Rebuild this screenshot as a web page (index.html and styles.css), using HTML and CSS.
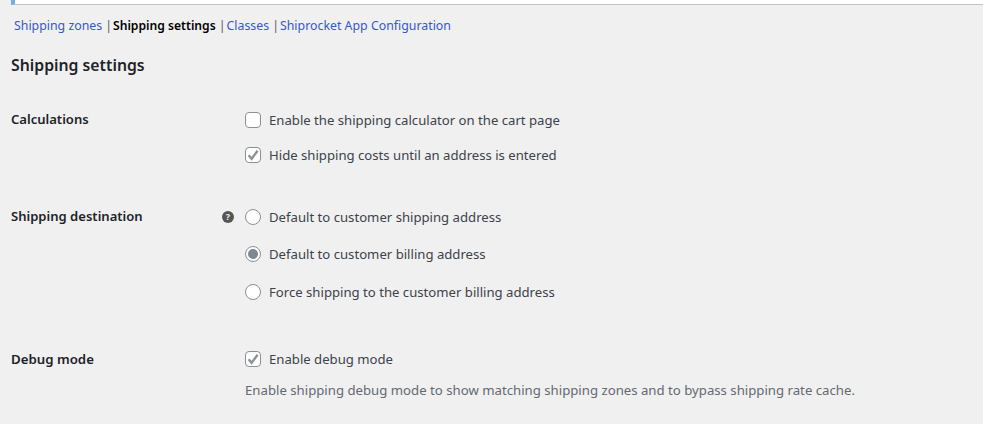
FILE: index.html
```html
<!DOCTYPE html>
<html lang="en">
<head>
    <meta charset="UTF-8">
    <title>Shipping settings</title>
    <link rel="stylesheet" href="styles.css">
</head>
<body>
<div class="notice"></div>
<ul class="subnav">
    <li><a href="#">Shipping zones</a><span class="sep">|</span></li>
    <li><a href="#" class="current">Shipping settings</a><span class="sep">|</span></li>
    <li><a href="#">Classes</a><span class="sep">|</span></li>
    <li><a href="#">Shiprocket App Configuration</a></li>
</ul>
<h2 class="page-title">Shipping settings</h2>

<div class="form-row row-calc">
    <div class="row-label">Calculations</div>
    <div class="row-tip"></div>
    <div class="row-field">
        <label class="option"><span class="box"></span>Enable the shipping calculator on the cart page</label>
        <label class="option"><span class="box">
            <svg viewBox="0 0 16 16" width="16" height="16"><path d="M3.6 8.2 6.6 11.8 12.6 3.8" fill="none" stroke="#8a929a" stroke-width="2.4"/></svg>
        </span>Hide shipping costs until an address is entered</label>
    </div>
</div>

<div class="form-row row-dest">
    <div class="row-label">Shipping destination</div>
    <div class="row-tip"><span class="help">?</span></div>
    <div class="row-field">
        <label class="option"><span class="radio"></span>Default to customer shipping address</label>
        <label class="option"><span class="radio checked"></span>Default to customer billing address</label>
        <label class="option"><span class="radio"></span>Force shipping to the customer billing address</label>
    </div>
</div>

<div class="form-row row-debug">
    <div class="row-label">Debug mode</div>
    <div class="row-tip"></div>
    <div class="row-field">
        <label class="option"><span class="box">
            <svg viewBox="0 0 16 16" width="16" height="16"><path d="M3.6 8.2 6.6 11.8 12.6 3.8" fill="none" stroke="#8a929a" stroke-width="2.4"/></svg>
        </span>Enable debug mode</label>
        <p class="desc">Enable shipping debug mode to show matching shipping zones and to bypass shipping rate cache.</p>
    </div>
</div>
</body>
</html>
```

FILE: styles.css
```css
*{
    margin: 0;
    padding: 0;
    box-sizing: border-box;
}
html,body{
    height: 100%;
    overflow: hidden;
}
body{
    background: #f0f0f1;
    color: #3c434a;
    font-family: "Noto Sans", "Open Sans", sans-serif;
    font-size: 13.15px;
    line-height: 18px;
    padding-left: 11px;
}
.notice{
    height: 5px;
    background: #fff;
    border-left: 4px solid #72aee6;
    border-bottom: 1px solid #c3c4c7;
}
.subnav{
    display: flex;
    list-style: none;
    padding-left: 3px;
    margin-top: 12px;
    height: 18px;
    font-size: 12.35px;
}
.subnav a{
    color: #3858c8;
    text-decoration: none;
}
.subnav a.current{
    color: #000;
    font-size: 12.15px;
    font-weight: 600;
}
.sep{
    color: #50575e;
    margin: 0 1px 0 3px;
}
.page-title{
    font-size: 15.8px;
    font-weight: 600;
    line-height: 22px;
    color: #1d2327;
    margin-top: 19px;
}
.form-row{
    display: flex;
}
.row-calc{
    margin-top: 35px;
}
.row-dest{
    margin-top: 44px;
}
.row-debug{
    margin-top: 49px;
}
.row-label{
    width: 207px;
    margin-top: -1px;
    font-size: 13.05px;
    font-weight: 600;
    color: #1d2327;
    white-space: nowrap;
}
.row-debug .row-label{
    margin-top: 0;
    font-size: 13.25px;
}
.row-tip{
    width: 27px;
    padding-left: 4px;
    display: flex;
    justify-content: flex-start;
}
.row-field{
    display: flex;
    flex-direction: column;
    gap: 17px;
}
.row-dest .row-field{
    gap: 19px;
}
.row-dest .option:last-child{
    margin-top: 1px;
}
.row-debug .row-field{
    gap: 13px;
}
.option{
    display: flex;
    align-items: center;
    height: 18px;
    white-space: nowrap;
}
.box,.radio{
    width: 16px;
    height: 16px;
    margin-right: 8px;
    background: #fff;
    border: 1px solid #8c8f94;
    display: inline-block;
    flex: none;
}
.box{
    border-radius: 4px;
}
.box svg{
    display: block;
    margin: -1px;
}
.radio{
    border-radius: 50%;
    display: flex;
    align-items: center;
    justify-content: center;
}
.radio.checked::before{
    content: "";
    width: 10px;
    height: 10px;
    border-radius: 50%;
    background: #7e8993;
}
.help{
    width: 12px;
    height: 12px;
    border-radius: 50%;
    background: #555;
    color: #f0f0f1;
    font-size: 9px;
    font-weight: 700;
    line-height: 12px;
    text-align: center;
    margin-top: 3px;
}
.desc{
    color: #646970;
    font-size: 13.2px;
    white-space: nowrap;
}
```
